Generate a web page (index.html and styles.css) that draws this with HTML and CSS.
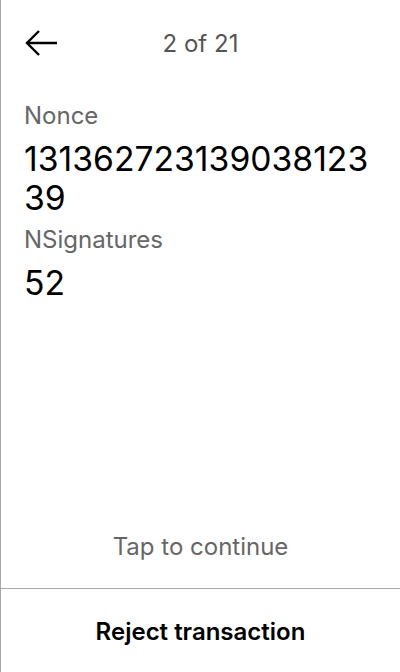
FILE: index.html
```html
<!DOCTYPE html>
<html>
<head>
<meta charset="utf-8">
<link rel="stylesheet" href="styles.css">
</head>
<body>
<div class="screen">
  <header class="header">
    <svg class="back" width="34" height="28" viewBox="0 0 34 28">
      <path d="M33 14H3M15 2L3 14l12 12" fill="none" stroke="#000" stroke-width="2.4"/>
    </svg>
    <div class="title">2 of 21</div>
  </header>
  <main class="content">
    <div class="label">Nonce</div>
    <div class="value">13136272313903812339</div>
    <div class="label">NSignatures</div>
    <div class="value">52</div>
  </main>
  <div class="tap">Tap to continue</div>
  <div class="reject">Reject transaction</div>
</div>
</body>
</html>
```
FILE: styles.css
```css
html, body { margin: 0; padding: 0; background: #fff; }
body { font-family: Inter, "Noto Sans", sans-serif; }
.screen {
  width: 400px; height: 672px; box-sizing: border-box;
  border-left: 1px solid #a8a8a8;
  display: flex; flex-direction: column;
}
.header {
  position: relative; height: 86px;
  display: flex; align-items: center; justify-content: center;
}
.back { position: absolute; left: 23px; top: 29px; }
.title { font-size: 24px; color: #555; }
.content { padding: 7px 23px 0; flex: 1; }
.label { font-size: 24px; color: #666; line-height: 46px; }
.value { font-size: 33.7px; color: #000; line-height: 39px; word-break: break-all; }
.tap { text-align: center; font-size: 24px; color: #666; height: 81px; line-height: 80px; border-bottom: 1px solid #a8a8a8; }
.reject { text-align: center; font-size: 24px; font-weight: 600; color: #000; height: 83px; line-height: 86px; }
```
